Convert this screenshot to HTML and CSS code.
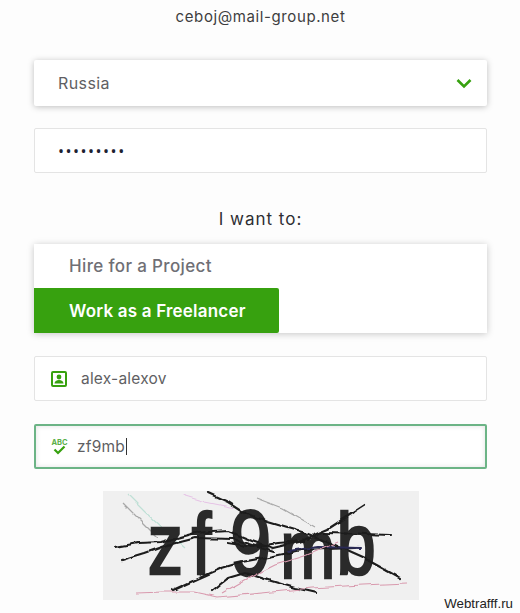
FILE: index.html
```html
<!DOCTYPE html>
<html lang="en">
<head>
<meta charset="utf-8">
<title>Sign up</title>
<link rel="stylesheet" href="styles.css">
</head>
<body>
<main class="form">
  <p class="email">ceboj@mail-group.net</p>
  <div class="field select">
    <span>Russia</span>
    <svg class="chevron" viewBox="0 0 16 11" width="16" height="11"><path d="M1.5 2 8 8.5 14.5 2" /></svg>
  </div>
  <div class="field password">•••••••••</div>
  <h2 class="want">I want to:</h2>
  <div class="choice">
    <div class="option">Hire for a Project</div>
    <div class="option active">Work as a Freelancer</div>
  </div>
  <div class="field user">
    <svg class="icon-user" viewBox="0 0 16 16" width="16" height="16">
      <rect class="outline" x="1" y="1" width="14" height="14" rx="1" />
      <circle class="fill" cx="8" cy="6" r="2.4" />
      <path class="fill" d="M3.5 12.6c0-2.4 2-3.6 4.5-3.6s4.5 1.2 4.5 3.6z" />
    </svg>
    <span>alex-alexov</span>
  </div>
  <div class="field captcha-input">
    <svg class="icon-abc" viewBox="0 0 17 18" width="17" height="18">
      <text class="abc" x="8.5" y="6.5" text-anchor="middle">ABC</text>
      <path class="tick" d="M3.5 11.5 7 15 13.5 8.5" />
    </svg>
    <span>zf9mb</span><i class="caret"></i>
  </div>
  <svg class="captcha" viewBox="0 0 316 109" width="316" height="109" role="img" aria-label="captcha">
    <defs>
      <filter id="wobble" x="-5%" y="-5%" width="110%" height="110%">
        <feTurbulence type="fractalNoise" baseFrequency="0.07" numOctaves="2" seed="4" result="n" />
        <feDisplacementMap in="SourceGraphic" in2="n" scale="5" xChannelSelector="R" yChannelSelector="G" />
        <feGaussianBlur stdDeviation="0.5" />
      </filter>
      <filter id="soften"><feGaussianBlur stdDeviation="0.6" /></filter>
    </defs>
    <g class="soft">
      <g class="thin">
        <path class="c-green" d="M25 4 42 21 59 37 82 57" />
        <path class="c-gray" d="M20 12 35 27 55 47" />
        <path class="c-gray" d="M153 7 179 17 212 36" />
        <path class="c-pink" d="M79 4 102 11 132 17" />
      </g>
    </g>
    <g class="blurred">
      <text class="letters" transform="scale(.8 1)" y="83"><tspan x="56">z</tspan><tspan x="111">f</tspan><tspan class="big-9" x="159" y="84">9</tspan><tspan class="small-m" x="222" y="87">m</tspan><tspan x="292" y="83">b</tspan></text>
    </g>
    <g class="soft">
      <g class="lines">
        <path d="M105 2 125 11 142 22 165 31 199 41 232 54 259 66 279 77 297 87" />
        <path d="M12 56 35 52 59 51 92 42 125 40 150 50 170 57 195 51 225 38 262 14" />
        <path d="M19 69 42 62 65 54 92 47 130 48 170 60" />
        <path d="M70 99 92 89 119 77 139 71 165 66 199 59 252 57" />
        <path d="M109 100 125 87 142 82 165 89 192 97 214 102" />
        <path d="M125 52 150 56 175 52 200 50" />
        <path d="M222 42 262 43 287 44" />
        <path class="navy" d="M185 60 215 56 258 57" />
      </g>
      <g class="thin">
        <path class="c-rose" d="M34 102 59 101 92 101 115 106 159 102 209 97 259 94 304 92" />
        <path class="c-rose" d="M119 102 142 89 172 74 205 64 235 51" />
      </g>
    </g>
  </svg>
</main>
<footer class="credit">Webtrafff.ru</footer>
</body>
</html>
```
FILE: styles.css
```css
* { box-sizing: border-box; }
html, body { margin: 0; padding: 0; }
body {
  width: 520px;
  height: 613px;
  overflow: hidden;
  background: #fdfdfd;
  font-family: Inter, "Open Sans", "Liberation Sans", sans-serif;
  color: #3d3d40;
  position: relative;
}
.form {
  display: flex;
  flex-direction: column;
  width: 453px;
  margin-left: 34px;
}
.email {
  margin: 6px 0 0;
  height: 22px;
  line-height: 22px;
  font-size: 15px;
  letter-spacing: .6px;
  text-align: center;
}
.field {
  display: flex;
  align-items: center;
  height: 45px;
  background: #fff;
  border: 1px solid #e4e4e4;
  border-radius: 2px;
  font-size: 15.5px;
  letter-spacing: .2px;
  color: #5f5f63;
}
.select {
  margin-top: 32px;
  height: 46px;
  padding: 0 15px 0 24px;
  justify-content: space-between;
  border: 0;
  box-shadow: 0 1px 6px rgba(0, 0, 0, .25);
  font-size: 16px;
  letter-spacing: .4px;
}
.chevron path {
  fill: none;
  stroke: #37a10f;
  stroke-width: 2.6;
}
.password {
  margin-top: 22px;
  padding-left: 23px;
  font-family: "Open Sans", sans-serif;
  font-size: 16px;
  letter-spacing: 1.5px;
  color: #1c2230;
}
.want {
  margin: 34px 0 0;
  height: 37px;
  line-height: 24px;
  font-size: 17px;
  letter-spacing: 1px;
  font-weight: 400;
  text-align: center;
  color: #2e2e33;
}
.choice {
  height: 89px;
  background: #fff;
  box-shadow: 0 1px 7px rgba(0, 0, 0, .22);
  display: flex;
  flex-direction: column;
}
.option {
  height: 44px;
  line-height: 44px;
  padding-left: 35px;
  font-size: 17px;
  letter-spacing: .35px;
  font-weight: 500;
  color: #6f6f75;
}
.option.active {
  height: 45px;
  width: 245px;
  background: #37a10f;
  border-radius: 0 2px 2px 0;
  letter-spacing: .2px;
  font-weight: 600;
  line-height: 46px;
  color: #fff;
}
.user {
  margin-top: 23px;
  padding-left: 16px;
  gap: 14px;
}
.icon-user .outline {
  fill: none;
  stroke: #37a10f;
  stroke-width: 2;
}
.icon-user .fill { fill: #37a10f; }
.captcha-input {
  margin-top: 23px;
  padding-left: 15px;
  border: 2px solid #6cb486;
  box-shadow: inset 0 0 5px rgba(0, 0, 0, .12);
}
.icon-abc { margin-right: 9px; }
.abc {
  font-size: 7.5px;
  font-weight: 700;
  letter-spacing: 0;
  fill: #5bb04a;
}
.tick {
  fill: none;
  stroke: #37a10f;
  stroke-width: 2.2;
}
.caret {
  display: block;
  width: 1px;
  height: 17px;
  margin-left: 1px;
  background: #333;
}
.captcha {
  display: block;
  margin: 22px 0 0 69px;
  background: #f0f0f0;
}
.soft { filter: url(#wobble); }
.blurred { filter: url(#soften); }
.letters {
  font-family: "Liberation Sans", sans-serif;
  font-size: 88px;
  letter-spacing: 0;
  fill: #2b2b2b;
  stroke: #2b2b2b;
  stroke-width: 2.6;
}
.big-9 { font-size: 92px; }
.small-m { font-size: 82px; }
.lines path {
  fill: none;
  stroke: #1c1c1c;
  stroke-width: 2.2;
  stroke-linejoin: round;
  stroke-linecap: round;
}
.lines .navy { stroke: #2a2a55; }
.thin path {
  fill: none;
  stroke-width: 1.2;
}
.c-green { stroke: #bfe0d6; }
.c-gray { stroke: #a8a8a8; }
.c-pink { stroke: #e6c4e6; }
.c-rose { stroke: #d99aae; }
.credit {
  position: absolute;
  right: 7px;
  bottom: 2px;
  font-family: "Liberation Sans", sans-serif;
  font-size: 13.3px;
  line-height: 14px;
  color: #222;
}
```
